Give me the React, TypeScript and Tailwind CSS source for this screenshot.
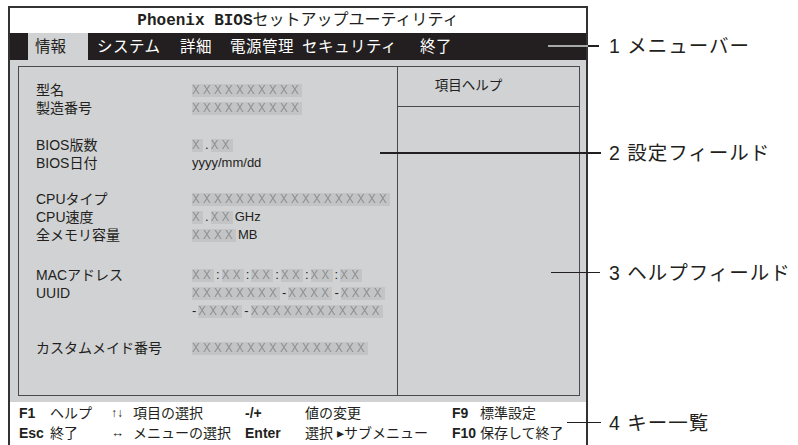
import React from 'react';

const jp = { fontFamily: '"Liberation Sans", "Noto Sans CJK JP", sans-serif' };

function Mask({ n }: { n: number }) {
  return (
    <span className="inline-block h-[13px] bg-[#c3c4c6] align-middle font-mono text-[13px] leading-[13px] tracking-[3.2px] text-[#929395] blur-[0.4px]">
      {'X'.repeat(n)}
    </span>
  );
}

function Row({ label, children }: { label: string; children?: React.ReactNode }) {
  return (
    <div className="flex h-[18px] items-center">
      <div className="w-[156px] shrink-0 text-[14px]">{label}</div>
      <div className="flex items-center gap-[2px] whitespace-nowrap text-[13px]">{children}</div>
    </div>
  );
}

const menu = [
  { t: 'システム', w: 'w-[83px]' },
  { t: '詳細', w: 'w-[50px]' },
  { t: '電源管理', w: 'w-[72px]' },
  { t: 'セキュリティ', w: 'w-[118px]' },
  { t: '終了', w: 'w-[60px]' },
];

export default function App() {
  return (
    <div className="relative h-[445px] w-[798px] overflow-hidden bg-white text-[#231f20]" style={jp}>
      {/* BIOS画面 */}
      <div className="ml-[8px] mt-[6px] flex h-[439px] w-[580px] flex-col border-x-2 border-t-2 border-[#333]">
        <div className="flex h-[25px] items-center justify-center bg-white text-[16px] font-bold">
          <span style={{ fontFamily: '"Liberation Mono", "Noto Sans CJK JP", monospace' }}>
            Phoenix BIOS<span className="font-normal">セットアップユーティリティ</span>
          </span>
        </div>

        <div className="flex h-[27px] items-center bg-[#231f20] text-[15.5px] text-white">
          <div className="ml-[18px] flex h-full w-[60px] items-center bg-[#d1d2d4] pl-[7px] text-[#231f20]">情報</div>
          <div className="w-[9px]" />
          {menu.map((m) => (
            <div key={m.t} className={`${m.w} shrink-0 tracking-[0.5px]`}>
              {m.t}
            </div>
          ))}
        </div>

        <div className="h-[342px] bg-[#d1d2d4] pb-[6px] pl-[8px] pr-[6px] pt-[6px]">
          <div className="flex h-full border-[1.5px] border-[#4a4a4a]">
            {/* 設定フィールド */}
            <div className="w-[378px] shrink-0 pl-[17px] pt-[14px]">
              <Row label="型名"><Mask n={10} /></Row>
              <Row label="製造番号"><Mask n={10} /></Row>

              <div className="mt-[19px]">
                <Row label="BIOS版数"><Mask n={1} /><span>.</span><Mask n={2} /></Row>
                <Row label="BIOS日付"><span>yyyy/mm/dd</span></Row>
              </div>

              <div className="mt-[18px]">
                <Row label="CPUタイプ"><Mask n={18} /></Row>
                <Row label="CPU速度"><Mask n={1} /><span>.</span><Mask n={2} /><span>GHz</span></Row>
                <Row label="全メモリ容量"><Mask n={4} /><span>MB</span></Row>
              </div>

              <div className="mt-[22px]">
                <Row label="MACアドレス">
                  <Mask n={2} /><span>:</span><Mask n={2} /><span>:</span><Mask n={2} /><span>:</span>
                  <Mask n={2} /><span>:</span><Mask n={2} /><span>:</span><Mask n={2} />
                </Row>
                <Row label="UUID">
                  <Mask n={8} /><span>-</span><Mask n={4} /><span>-</span><Mask n={4} />
                </Row>
                <Row label="">
                  <span>-</span><Mask n={4} /><span>-</span><Mask n={12} />
                </Row>
              </div>

              <div className="mt-[19px]">
                <Row label="カスタムメイド番号"><Mask n={16} /></Row>
              </div>
            </div>

            {/* ヘルプフィールド */}
            <div className="flex flex-1 flex-col border-l-[1.5px] border-[#4a4a4a]">
              <div className="flex h-[40px] items-center justify-center border-b-[1.5px] border-[#4a4a4a] pr-[40px] text-[13.5px]">
                項目ヘルプ
              </div>
            </div>
          </div>
        </div>

        <div className="grid grid-cols-[31px_61px_22px_112px_60px_147px_28px_1fr] pl-[9px] pt-[1px] text-[14px] leading-[20px]">
          <b>F1</b><span>ヘルプ</span><span className="text-[12px]">↑↓</span><span>項目の選択</span><b>-/+</b><span>値の変更</span><b>F9</b><span>標準設定</span>
          <b>Esc</b><span>終了</span><span className="text-[13px]">↔</span><span>メニューの選択</span><b>Enter</b><span>選択 ▸サブメニュー</span><b>F10</b><span>保存して終了</span>
        </div>
      </div>

      {/* 引き出し線と説明 */}
      <div className="absolute left-[548px] top-[45px] h-[2px] w-[40px] bg-[#a7a8aa]" />
      <div className="absolute left-[588px] top-[45px] h-[1.5px] w-[11px] bg-[#231f20]" />
      <div className="absolute left-[380px] top-[152px] h-[1.5px] w-[221px] bg-[#231f20]" />
      <div className="absolute left-[551px] top-[272px] h-[1px] w-[49px] bg-[#231f20]" />
      <div className="absolute left-[567px] top-[422px] h-[1px] w-[34px] bg-[#231f20]" />

      <div className="absolute left-[609px] top-[33px] text-[19.5px] leading-[26px] tracking-[1px]">1 メニューバー</div>
      <div className="absolute left-[609px] top-[140px] text-[19.5px] leading-[26px] tracking-[1px]">2 設定フィールド</div>
      <div className="absolute left-[609px] top-[260px] text-[19.5px] leading-[26px] tracking-[1px]">3 ヘルプフィールド</div>
      <div className="absolute left-[609px] top-[410px] text-[19.5px] leading-[26px] tracking-[1px]">4 キー一覧</div>
    </div>
  );
}
